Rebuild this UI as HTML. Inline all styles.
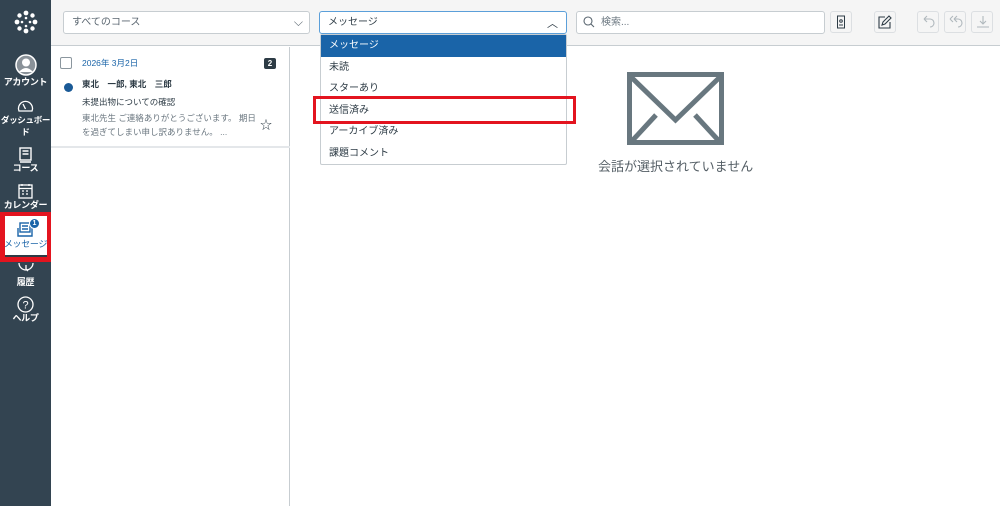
<!DOCTYPE html>
<html><head><meta charset="utf-8"><style>
*{box-sizing:border-box;margin:0;padding:0}
body{width:1000px;height:506px;overflow:hidden;background:#fff;font-family:"Liberation Sans","Noto Sans CJK JP",sans-serif;position:relative}
.a{position:absolute}
.side{left:0;top:0;width:51px;height:506px;background:#334451}
.nav{position:absolute;left:-5px;width:61px;text-align:center;color:#fff;font-size:9px;font-weight:bold;line-height:11px;letter-spacing:-0.3px;white-space:nowrap}
.top{left:51px;top:0;width:949px;height:46px;background:#f5f5f5;border-bottom:1px solid #c7cdd1}
.sel{background:#fff;border:1px solid #c7cdd1;border-radius:3px;height:23px;font-size:10px;color:#2d3b45;padding:0 8px;line-height:21px}
.btn{background:#f5f5f5;border:1px solid #dcdfe2;border-radius:3px;width:22px;height:22px}
.dd{left:320px;top:34px;width:247px;height:131px;background:#fff;border:1px solid #c7cdd1;border-radius:2px;font-size:10px;color:#2d3b45}
.dd div{height:21.6px;padding:0 8px;line-height:21px}
</style></head><body>
<div class="a side"></div>
<svg class="a" style="left:13px;top:9px" width="26" height="26" viewBox="0 0 26 26" fill="#fff"><circle cx="13" cy="4" r="2.4"/><circle cx="13" cy="22" r="2.4"/><circle cx="4" cy="13" r="2.4"/><circle cx="22" cy="13" r="2.4"/><circle cx="6.5" cy="6.5" r="2.2"/><circle cx="19.5" cy="6.5" r="2.2"/><circle cx="6.5" cy="19.5" r="2.2"/><circle cx="19.5" cy="19.5" r="2.2"/><circle cx="13" cy="9" r="1.3"/><circle cx="13" cy="17" r="1.3"/><circle cx="9" cy="13" r="1.3"/><circle cx="17" cy="13" r="1.3"/></svg>
<svg class="a" style="left:15px;top:54px" width="22" height="22" viewBox="0 0 22 22"><circle cx="11" cy="11" r="10" fill="#8a9299" stroke="#fff" stroke-width="1.5"/><circle cx="11" cy="8.5" r="4" fill="#fff"/><path d="M4 18 Q11 10 18 18" fill="#fff"/></svg>
<div class="nav" style="top:77px">アカウント</div>
<svg class="a" style="left:17px;top:99px" width="17" height="13" viewBox="0 0 17 13" fill="none" stroke="#fff" stroke-width="1.3"><path d="M2 12 A7 7 0 1 1 15 12 Z"/><path d="M8.5 10 L6 5"/></svg>
<div class="nav" style="top:114px;line-height:12px;font-size:8.5px">ダッシュボー<br>ド</div>
<svg class="a" style="left:19px;top:147px" width="13" height="16" viewBox="0 0 13 16" fill="none" stroke="#fff" stroke-width="1.4"><rect x="1" y="1" width="11" height="12"/><path d="M3.5 4h6M3.5 7h6M1 15h11"/></svg>
<div class="nav" style="top:163px">コース</div>
<svg class="a" style="left:18px;top:183px" width="15" height="16" viewBox="0 0 15 16" fill="none" stroke="#fff" stroke-width="1.3"><rect x="1" y="2" width="13" height="13"/><path d="M1 5.5h13M4 1v2M11 1v2M4 8h2M8 8h2M4 11h2M8 11h2"/></svg>
<div class="nav" style="top:200px">カレンダー</div>
<div class="a" style="left:0;top:212px;width:51px;height:50px;background:#e3141f"></div>
<div class="a" style="left:5px;top:216px;width:42px;height:39px;background:#fff"></div>
<svg class="a" style="left:17px;top:222px" width="16" height="15" viewBox="0 0 16 15" fill="none" stroke="#1a64a8" stroke-width="1.4"><rect x="3" y="1" width="10" height="9"/><path d="M5 4h6M5 7h6M1 6v8h14V6"/></svg>
<div class="a" style="left:29px;top:218px;width:11px;height:11px;border-radius:50%;background:#1a64a8;color:#fff;font-size:7px;text-align:center;line-height:9px;font-weight:bold;border:1px solid #fff">1</div>
<div class="nav" style="top:239px;color:#1a64a8;font-weight:normal">メッセージ</div>
<div class="a" style="left:5px;top:255px;width:42px;height:2px;background:#2d3b45"></div>
<svg class="a" style="left:18px;top:262px" width="16" height="12" viewBox="0 0 16 12" fill="none" stroke="#fff" stroke-width="1.3"><path d="M1 1 A7 7 0 1 0 15 1"/><path d="M8 3v4l2 2"/></svg>
<div class="nav" style="top:277px">履歴</div>
<svg class="a" style="left:17px;top:296px" width="17" height="17" viewBox="0 0 17 17" fill="none" stroke="#fff" stroke-width="1.3"><circle cx="8.5" cy="8.5" r="7.5"/><text x="8.5" y="12.5" font-size="11" fill="#fff" stroke="none" text-anchor="middle" font-family="Liberation Sans">?</text></svg>
<div class="nav" style="top:313px">ヘルプ</div>

<div class="a top"></div>
<div class="a sel" style="left:63px;top:11px;width:247px;color:#5a6670">すべてのコース<span style="position:absolute;right:6px;top:0;font-size:12px">⌵</span></div>
<div class="a sel" style="left:319px;top:11px;width:248px;border:1px solid #5b9fd9">メッセージ<span style="position:absolute;right:8px;top:2px;font-size:11px">︿</span></div>
<div class="a sel" style="left:576px;top:11px;width:249px;color:#6b7780;padding-left:24px">検索...</div>
<svg class="a" style="left:583px;top:16px" width="12" height="12" viewBox="0 0 12 12" fill="none" stroke="#5a6670" stroke-width="1.1"><circle cx="5" cy="5" r="4"/><path d="M8 8l3 3"/></svg>
<div class="a btn" style="left:830px;top:11px"></div>
<svg class="a" style="left:836px;top:15px" width="10" height="14" viewBox="0 0 10 14" fill="none" stroke="#2d3b45" stroke-width="1"><rect x="1.5" y="1" width="7" height="12"/><circle cx="5" cy="6" r="1.3"/><path d="M3 10h4"/></svg>
<div class="a btn" style="left:874px;top:11px"></div>
<svg class="a" style="left:878px;top:15px" width="14" height="14" viewBox="0 0 14 14" fill="none" stroke="#2d3b45" stroke-width="1.1"><path d="M7 2H1v11h11V7"/><path d="M4 10l1-3 6-6 2 2-6 6z"/></svg>
<div class="a btn" style="left:917px;top:11px"></div>
<div class="a btn" style="left:944px;top:11px"></div>
<div class="a btn" style="left:971px;top:11px"></div>
<svg class="a" style="left:921px;top:15px" width="70" height="14" viewBox="0 0 70 14" fill="none" stroke="#b0b8bd" stroke-width="1.1"><path d="M3 4h6a4 4 0 0 1 0 8M3 4l3-3M3 4l3 3"/><path d="M33 4h4a4 4 0 0 1 0 8M33 4l3-3M33 4l3 3M29 4l3-3M29 4l3 3"/><path d="M62 1v8M59 6l3 3 3-3M56 12h12"/></svg>

<div class="a" style="left:51px;top:47px;width:239px;height:459px;border-right:1px solid #c7cdd1"></div>
<div class="a" style="left:60px;top:57px;width:12px;height:12px;border:1px solid #8b969e;border-radius:2px"></div>
<div class="a" style="left:82px;top:57px;font-size:8.5px;color:#1a64a8">2026年 3月2日</div>
<div class="a" style="left:264px;top:58px;width:12px;height:11px;background:#2d3b45;border-radius:2px;color:#fff;font-size:8px;font-weight:bold;text-align:center;line-height:11px">2</div>
<div class="a" style="left:64px;top:83px;width:9px;height:9px;border-radius:50%;background:#1a5a96"></div>
<div class="a" style="left:82px;top:78px;font-size:8.5px;font-weight:bold;color:#2d3b45;white-space:pre">東北　一郎, 東北　三郎</div>
<div class="a" style="left:82px;top:96px;font-size:8.5px;color:#2d3b45">未提出物についての確認</div>
<div class="a" style="left:82px;top:111px;width:180px;font-size:8.5px;color:#6b7780;line-height:14px">東北先生 ご連絡ありがとうございます。 期日を過ぎてしまい申し訳ありません。 ...</div>
<div class="a" style="left:260px;top:116px;font-size:12px;color:#2d3b45">☆</div>
<div class="a" style="left:51px;top:146px;width:239px;height:2px;background:#e4e7ea"></div>

<svg class="a" style="left:627px;top:72px" width="97" height="73" viewBox="0 0 97 73" fill="none" stroke="#68777f" stroke-width="5"><rect x="2.5" y="2.5" width="92" height="68"/><path d="M3 4l45.5 44L94 4M5 69l24-26M92 69L68 43"/></svg>
<div class="a" style="left:598px;top:156px;font-size:13px;color:#555f66">会話が選択されていません</div>

<div class="a dd">
<div style="background:#1a64a8;color:#fff">メッセージ</div>
<div>未読</div><div>スターあり</div><div>送信済み</div><div>アーカイブ済み</div><div>課題コメント</div>
</div>
<div class="a" style="left:313px;top:96px;width:263px;height:28px;border:3px solid #e3141f"></div>
</body></html>
